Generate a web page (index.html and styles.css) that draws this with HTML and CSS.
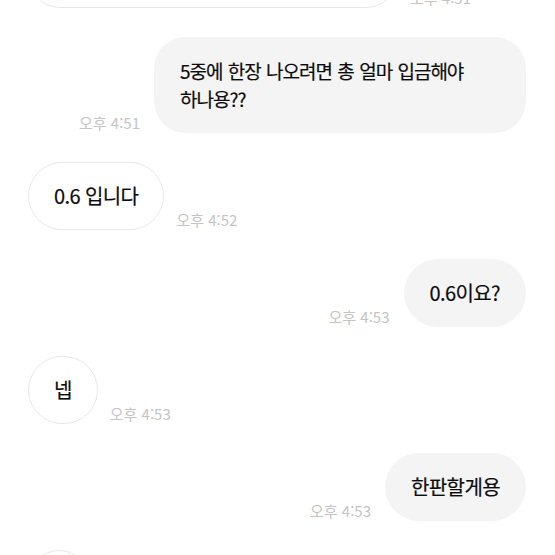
FILE: index.html
```html
<!DOCTYPE html>
<html lang="ko">
<head>
  <meta charset="UTF-8">
  <title>채팅</title>
  <link rel="stylesheet" href="styles.css">
</head>
<body>
  <div class="chat">
    <div class="row recv">
      <div class="bubble cut"></div>
      <span class="time">오후 4:51</span>
    </div>

    <div class="row sent">
      <span class="time">오후 4:51</span>
      <div class="bubble wide">5중에 한장 나오려면 총 얼마 입금해야 하나용??</div>
    </div>

    <div class="row recv">
      <div class="bubble">0.6 입니다</div>
      <span class="time">오후 4:52</span>
    </div>

    <div class="row sent">
      <span class="time">오후 4:53</span>
      <div class="bubble">0.6이요?</div>
    </div>

    <div class="row recv">
      <div class="bubble">넵</div>
      <span class="time">오후 4:53</span>
    </div>

    <div class="row sent">
      <span class="time">오후 4:53</span>
      <div class="bubble">한판할게용</div>
    </div>

    <div class="row recv">
      <div class="bubble">&nbsp;&nbsp;</div>
    </div>
  </div>
</body>
</html>
```

FILE: styles.css
```css
html, body {
  overflow: hidden;
}

body {
  margin: 0;
  background: #fff;
  font-family: 'Noto Sans CJK KR', 'Noto Sans', sans-serif;
  color: #0c0c0c;
}

.chat {
  display: flex;
  flex-direction: column;
  gap: 29px;
  margin-top: -88px;
  padding: 0 29px 0 28px;
}

.row {
  display: flex;
  align-items: flex-end;
  gap: 12px;
}

.row.sent {
  justify-content: flex-end;
  gap: 14px;
}

.bubble {
  font-size: 20px;
  letter-spacing: -0.6px;
  line-height: 28px;
  padding: 20px 26px;
  border-radius: 34px;
  white-space: nowrap;
  -webkit-text-stroke: 0.2px currentColor;
}

.recv .bubble {
  background: #fff;
  border: 1px solid #e8e8e8;
  padding: 19px 25px;
}

.sent .bubble {
  background: #f4f4f4;
}

.bubble.wide {
  white-space: normal;
  word-break: keep-all;
  font-size: 19px;
  letter-spacing: -1px;
  word-spacing: 1px;
  width: 320px;
  border-radius: 32px;
}

.bubble.cut {
  width: 318px;
  height: 56px;
  border-radius: 32px;
}

.time {
  font-size: 15px;
  line-height: 18px;
  color: #c4c4c4;
  margin-bottom: 1px;
  white-space: nowrap;
}
```
